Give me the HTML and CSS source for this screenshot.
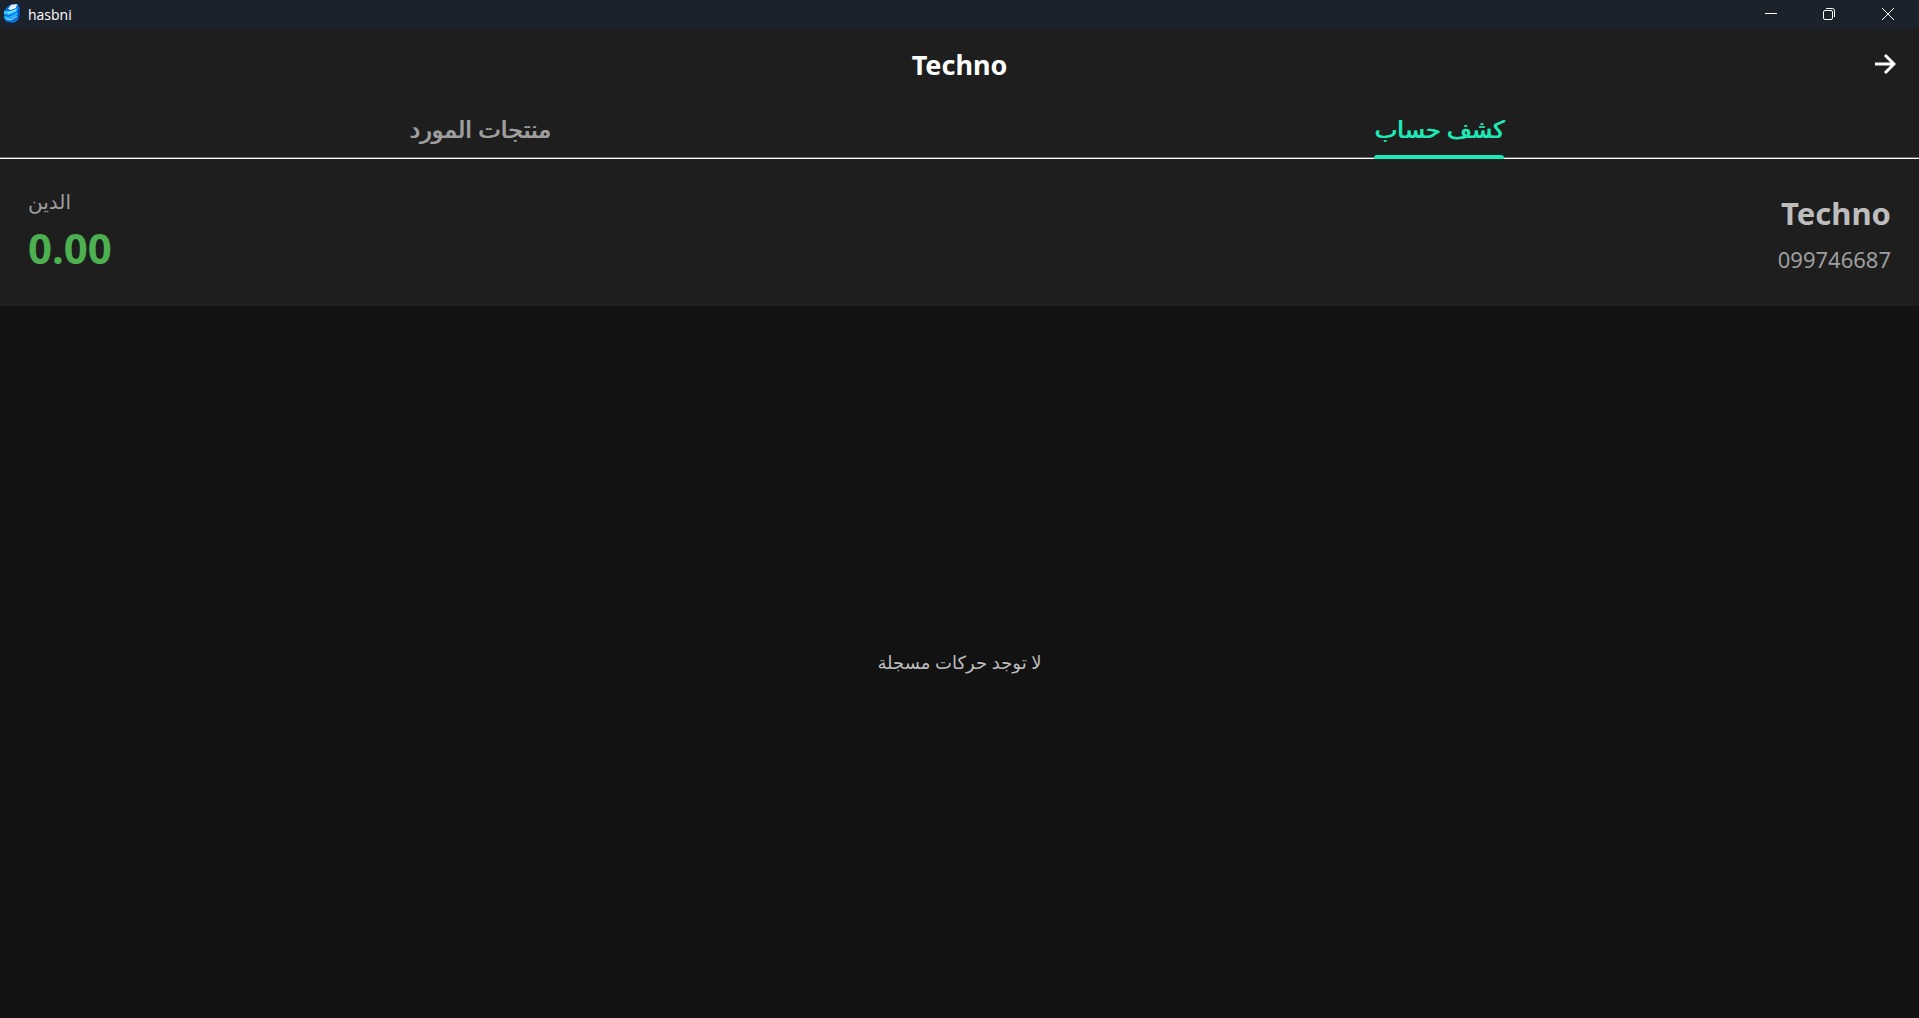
FILE: index.html
```html
<!DOCTYPE html>
<html lang="ar" dir="rtl">
<head>
<meta charset="utf-8">
<title>hasbni</title>
<meta name="viewport" content="width=device-width, initial-scale=1">
<link rel="stylesheet" href="styles.css">
</head>
<body>
<div class="window">
  <div class="titlebar" dir="ltr">
    <svg class="app-icon" viewBox="0 0 18 20" aria-hidden="true">
      <path d="M5 2L9 0H15L17 5V11L15 16L11 19L4 18L1 15V7Z" fill="#0870d8"/>
      <path d="M5 5L8 1L14 0L13 4L8 6Z" fill="#e8f6ff"/>
      <path d="M1 7L8 7L15 4L13 8L6 11L1 10Z" fill="#35c8ff"/>
      <path d="M1 12L6 13L15 8L14 11L8 15L2 15Z" fill="#20b4ff"/>
      <path d="M5 9L13 6M3 15L8 16L14 12" fill="none" stroke="#a5e3ff"/>
      <path d="M15 4L17 6V11L15 15Z" fill="#0546a8"/>
    </svg>
    <span class="app-name">hasbni</span>
    <button class="win-button" aria-label="Minimize"><svg viewBox="0 0 14 14"><path d="M1 6.5H13"/></svg></button>
    <button class="win-button" aria-label="Restore"><svg viewBox="0 0 14 14"><rect x="1.5" y="3.5" width="9" height="9" rx="1.5"/><path d="M4 1.5H10.500Q12.500 1.500 12.500 3.500V10"/></svg></button>
    <button class="win-button" aria-label="Close"><svg viewBox="0 0 14 14"><path d="M1 1L13 13M13 1L1 13"/></svg></button>
  </div>
  <header class="appbar">
    <button class="back" aria-label="رجوع"><svg viewBox="0 0 22 22"><path d="M1 11H19M11 2L20 11L11 20"/></svg></button>
    <h1 class="title">Techno</h1>
  </header>
  <nav class="tabs" role="tablist">
    <button class="tab tab-active" role="tab" aria-selected="true"><span class="tab-label">كشف حساب</span></button>
    <button class="tab" role="tab" aria-selected="false"><span class="tab-label">منتجات المورد</span></button>
  </nav>
  <section class="summary">
    <div class="supplier">
      <h2 class="supplier-name">Techno</h2>
      <p class="phone">099746687</p>
    </div>
    <div class="debt">
      <p class="debt-label">الدين</p>
      <p class="debt-value">0.00</p>
    </div>
  </section>
  <main class="empty"><p class="empty-text">لا توجد حركات مسجلة</p></main>
</div>
</body>
</html>
```
FILE: styles.css
```css
* { box-sizing: border-box; }
body, h1, h2, p { margin: 0; }
body {
  background: #121212;
  font-family: "Noto Sans", "DejaVu Sans", sans-serif;
}
button {
  padding: 0;
  border: 0;
  background: none;
  color: inherit;
  font: inherit;
}
.window {
  display: flex;
  flex-direction: column;
  min-height: 100vh;
}
.titlebar {
  display: flex;
  align-items: flex-start;
  height: 29px;
  padding: 0 1px 0 3px;
  background: #1c222b;
  color: #fff;
}
.app-icon { width: 18px; height: 20px; margin-top: 4px; }
.app-name {
  flex: 1;
  padding-left: 7px;
  font: 14px/30px "Open Sans", sans-serif;
}
.win-button {
  display: flex;
  align-items: center;
  justify-content: center;
  width: 58px;
  height: 28px;
}
.win-button:last-child { width: 60px; }
.win-button svg {
  width: 14px;
  height: 14px;
  fill: none;
  stroke: #fff;
}
.appbar {
  display: grid;
  grid-template-columns: 68px 1fr 68px;
  align-items: center;
  height: 70px;
  background: #1e1e1e;
  color: #fff;
}
.back {
  display: flex;
  align-items: center;
  justify-content: center;
  height: 56px;
}
.back svg {
  width: 22px;
  height: 22px;
  fill: none;
  stroke: currentColor;
  stroke-width: 3;
}
.title {
  padding-top: 2px;
  text-align: center;
  font-size: 27px;
  line-height: 40px;
  font-weight: 700;
}
.tabs {
  display: grid;
  grid-template-columns: 1fr 1fr;
  height: 60px;
  background: linear-gradient(#666 50%, #fff 50%) bottom / 100% 2px no-repeat #1e1e1e;
  color: #9e9e9e;
}
.tab {
  display: flex;
  justify-content: center;
  font-size: 24px;
  line-height: 60px;
  text-shadow: 1px 0 currentColor;
}
.tab-label {
  display: flex;
  flex-direction: column;
  height: 60px;
}
.tab-active { color: #1de9b6; }
.tab-active .tab-label::after {
  content: "";
  height: 4px;
  margin-top: -4px;
  border-radius: 3px 3px 0 0;
  background: currentColor;
}
.summary {
  display: flex;
  justify-content: space-between;
  height: 147px;
  padding: 27px 28px;
  background: #1e1e1e;
}
.supplier { padding-top: 3px; }
.supplier-name {
  color: #bdbdbd;
  font-size: 31px;
  line-height: 48px;
  font-weight: 700;
}
.phone {
  color: #9e9e9e;
  font-size: 22px;
  line-height: 44px;
}
.debt { text-align: left; }
.debt-label {
  color: #9e9e9e;
  font-size: 20px;
  line-height: 32px;
}
.debt-value {
  color: #4caf50;
  font-size: 42px;
  line-height: 60px;
  font-weight: 700;
}
.empty {
  flex: 1;
  display: flex;
  align-items: center;
  justify-content: center;
  color: #bdbdbd;
}
.empty-text {
  font-size: 18px;
  line-height: 28px;
}
```
